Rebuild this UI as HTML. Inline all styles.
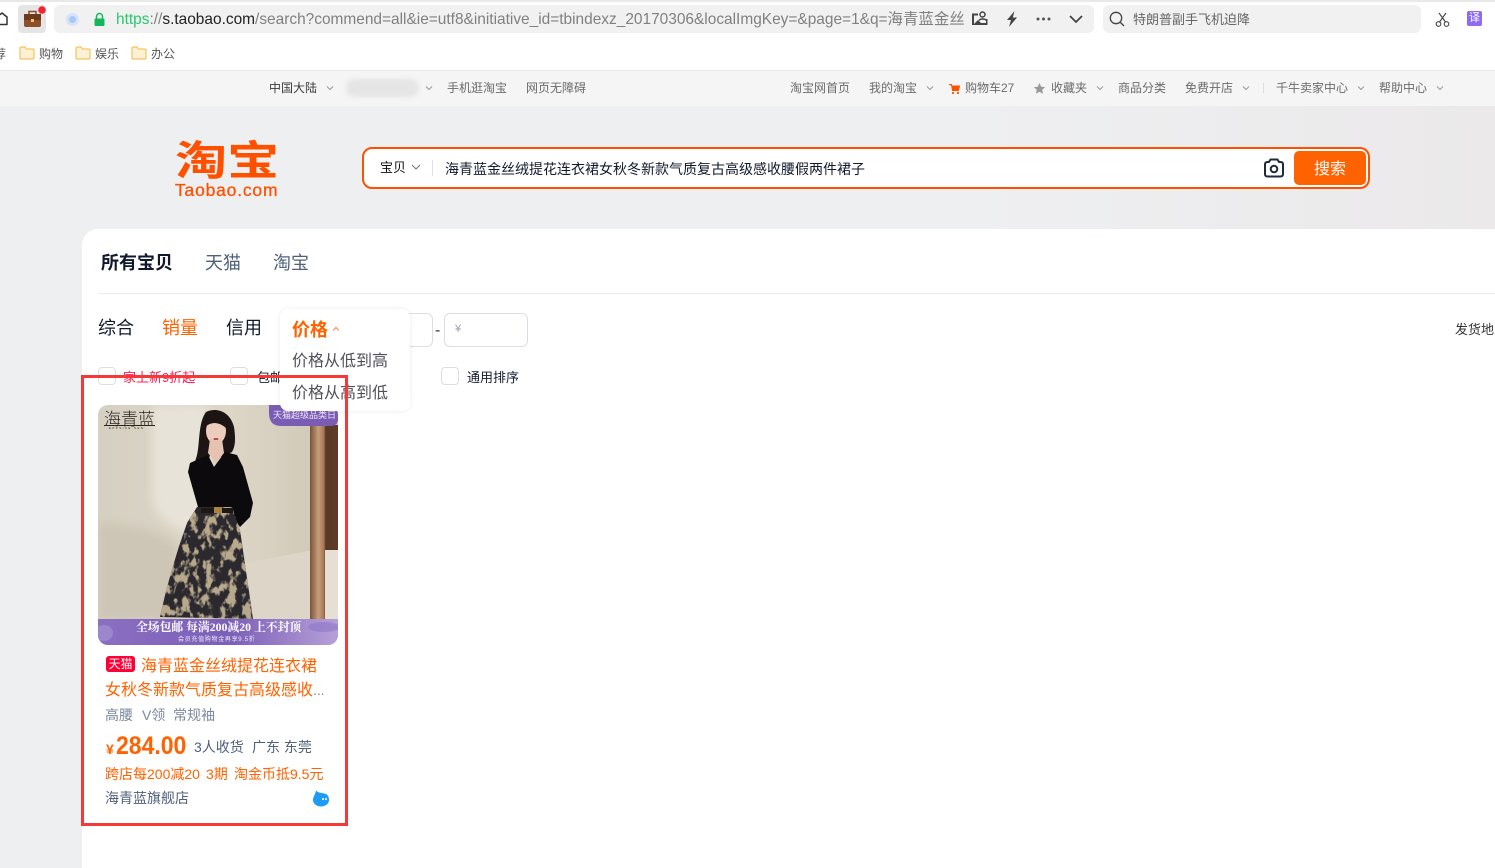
<!DOCTYPE html>
<html lang="zh-CN">
<head>
<meta charset="utf-8">
<title>淘宝搜索</title>
<style>
html,body{margin:0;padding:0;width:1495px;height:868px;overflow:hidden;background:#fff;font-family:"Liberation Sans","Noto Sans CJK SC",sans-serif;}
.a{position:absolute;}
.t{position:absolute;white-space:nowrap;line-height:1;}
.nav{font-size:12px;color:#6b6b6b;top:82px;}
.car{position:absolute;top:85px;width:8px;height:6px;}
.cb{position:absolute;width:16px;height:16px;border:1px solid #dcdee3;border-radius:4px;background:#fff;}
</style>
</head>
<body>
<div class="a" style="left:0;top:0;width:1495px;height:868px;overflow:hidden;">
<!-- browser chrome -->
<div class="a" style="left:0;top:0;width:1495px;height:2px;background:#e8e8e8;"></div>
<svg class="a" style="left:0;top:10px;" width="10" height="18" viewBox="0 0 10 18"><path d="M-3 7L2 3L7 7V14.500H-3Z" fill="none" stroke="#333" stroke-width="1.500" stroke-linejoin="round"/></svg>
<div class="a" style="left:18px;top:5px;width:28px;height:28px;background:#e5e5e5;border-radius:4px;"></div>
<svg class="a" style="left:22px;top:6px;" width="24" height="24" viewBox="0 0 24 24"><path d="M7 8V5.500H14V8" fill="none" stroke="#8a4a2a" stroke-width="1.500"/><rect x="2" y="8" width="17" height="13" rx="2" fill="#8d4f2c"/><rect x="2" y="8" width="17" height="6" fill="#6d3a20"/><rect x="9" y="13" width="3" height="3" fill="#f2c55c"/><circle cx="20" cy="4" r="3.800" fill="#f5222d"/></svg>
<div class="a" style="left:54px;top:5px;width:1040px;height:28px;background:#f1f1f1;border-radius:6px;"></div>
<div class="a" style="left:66px;top:13px;width:13px;height:13px;border-radius:50%;background:#d5e3fb;"></div>
<div class="a" style="left:69px;top:16px;width:7px;height:7px;border-radius:50%;background:#a9c6f7;"></div>
<svg class="a" style="left:93px;top:12px;" width="13" height="15" viewBox="0 0 13 15"><path d="M3.500 7V4.500a3 3 0 0 1 6 0V7" fill="none" stroke="#14b85a" stroke-width="1.500"/><rect x="1.500" y="6.500" width="10" height="7.500" rx="1" fill="#14b85a"/></svg>
<div class="t" style="left:116px;top:11px;width:848px;height:18px;line-height:17px;overflow:hidden;font-size:15.450px;color:#808080;"><span style="color:#28c76f;">https</span>://<span style="color:#222;">s.taobao.com</span>/search?commend=all&amp;ie=utf8&amp;initiative_id=tbindexz_20170306&amp;localImgKey=&amp;page=1&amp;q=海青蓝金丝绒提花</div>
<svg class="a" style="left:970px;top:10px;" width="20" height="18" viewBox="0 0 20 18"><path d="M2 3.500H8V5.500H4V14L8 10L11 13H16V9H17.500V15H2Z" fill="#444"/><circle cx="12.500" cy="4.500" r="2.500" fill="none" stroke="#444" stroke-width="1.500"/><path d="M9 10.500C10 8.500 15 8.500 16.500 10.500" fill="none" stroke="#444" stroke-width="1.500"/></svg>
<svg class="a" style="left:1004px;top:10px;" width="16" height="18" viewBox="0 0 16 18"><path d="M10.500 1L3 10H7L5 17L13 7.500H8.800Z" fill="#444"/></svg>
<svg class="a" style="left:1035px;top:16px;" width="18" height="6" viewBox="0 0 18 6"><circle cx="3" cy="3" r="1.500" fill="#555"/><circle cx="8.500" cy="3" r="1.500" fill="#555"/><circle cx="14" cy="3" r="1.500" fill="#555"/></svg>
<svg class="a" style="left:1068px;top:14px;" width="16" height="10" viewBox="0 0 16 10"><path d="M2 2L8 8L14 2" fill="none" stroke="#444" stroke-width="1.800"/></svg>
<div class="a" style="left:1103px;top:5px;width:318px;height:28px;background:#f1f1f1;border-radius:6px;"></div>
<svg class="a" style="left:1108px;top:10px;" width="18" height="18" viewBox="0 0 18 18"><circle cx="8" cy="8" r="5.700" fill="none" stroke="#444" stroke-width="1.300"/><path d="M12 12L16 16" stroke="#444" stroke-width="1.300"/></svg>
<div class="t" style="left:1133px;top:13px;font-size:13px;color:#666;">特朗普副手飞机迫降</div>
<svg class="a" style="left:1435px;top:11px;" width="16" height="17" viewBox="0 0 16 17"><circle cx="3.500" cy="13" r="2.300" fill="none" stroke="#444" stroke-width="1.100"/><circle cx="11.500" cy="13" r="2.300" fill="none" stroke="#444" stroke-width="1.100"/><path d="M4.500 11L11 2M10.500 11L4 2" stroke="#444" stroke-width="1.100" fill="none"/></svg>
<div class="a" style="left:1467px;top:11px;width:15px;height:15px;border-radius:2px;background:#8f6bf0;color:#fff;font-size:11px;line-height:15px;text-align:center;">译</div>
<!-- bookmarks -->
<div class="t" style="left:-6px;top:48px;font-size:12px;color:#555;">荐</div>
<svg class="a" style="left:19px;top:46px;" width="16" height="14" viewBox="0 0 16 14"><path d="M1 2.500Q1 1 2.500 1H6L7.500 3H14Q15 3 15 4V12Q15 13 14 13H2Q1 13 1 12Z" fill="#fff1d6" stroke="#f6b73c" stroke-width="1"/></svg>
<div class="t" style="left:39px;top:48px;font-size:12px;color:#555;">购物</div>
<svg class="a" style="left:75px;top:46px;" width="16" height="14" viewBox="0 0 16 14"><path d="M1 2.500Q1 1 2.500 1H6L7.500 3H14Q15 3 15 4V12Q15 13 14 13H2Q1 13 1 12Z" fill="#fff1d6" stroke="#f6b73c" stroke-width="1"/></svg>
<div class="t" style="left:95px;top:48px;font-size:12px;color:#555;">娱乐</div>
<svg class="a" style="left:131px;top:46px;" width="16" height="14" viewBox="0 0 16 14"><path d="M1 2.500Q1 1 2.500 1H6L7.500 3H14Q15 3 15 4V12Q15 13 14 13H2Q1 13 1 12Z" fill="#fff1d6" stroke="#f6b73c" stroke-width="1"/></svg>
<div class="t" style="left:151px;top:48px;font-size:12px;color:#555;">办公</div>
<!-- site nav -->
<div class="a" style="left:0;top:70px;width:1495px;height:36px;background:#f5f5f5;border-top:1px solid #e8e8e8;box-sizing:border-box;"></div>
<div class="t nav" style="left:269px;color:#3c3c3c;">中国大陆</div>
<svg class="car" style="left:326px;" viewBox="0 0 8 6"><path d="M1 1.500L4 4.500L7 1.500" fill="none" stroke="#999" stroke-width="1"/></svg>
<div class="a" style="left:346px;top:79px;width:73px;height:18px;border-radius:9px;background:#e5e5e5;filter:blur(2px);"></div>
<svg class="car" style="left:425px;" viewBox="0 0 8 6"><path d="M1 1.500L4 4.500L7 1.500" fill="none" stroke="#999" stroke-width="1"/></svg>
<div class="t nav" style="left:447px;">手机逛淘宝</div>
<div class="t nav" style="left:526px;">网页无障碍</div>
<div class="t nav" style="left:790px;">淘宝网首页</div>
<div class="t nav" style="left:869px;">我的淘宝</div>
<svg class="car" style="left:926px;" viewBox="0 0 8 6"><path d="M1 1.500L4 4.500L7 1.500" fill="none" stroke="#999" stroke-width="1"/></svg>
<svg class="a" style="left:949px;top:83px;" width="11" height="12" viewBox="0 0 11 12"><path d="M0 1.500H2.500L3.500 7.500H9.500L10.500 3H3" fill="#ff5000" stroke="#ff5000" stroke-width="1"/><circle cx="4" cy="10" r="1.100" fill="#ff5000"/><circle cx="9" cy="10" r="1.100" fill="#ff5000"/></svg>
<div class="t nav" style="left:965px;">购物车27</div>
<svg class="a" style="left:1033px;top:82px;" width="13" height="13" viewBox="0 0 13 13"><path d="M6.500 1L8.200 4.700L12.200 5.100L9.200 7.800L10 11.800L6.500 9.800L3 11.800L3.800 7.800L.8 5.100L4.800 4.700Z" fill="#999"/></svg>
<div class="t nav" style="left:1051px;">收藏夹</div>
<svg class="car" style="left:1096px;" viewBox="0 0 8 6"><path d="M1 1.500L4 4.500L7 1.500" fill="none" stroke="#999" stroke-width="1"/></svg>
<div class="t nav" style="left:1118px;">商品分类</div>
<div class="t nav" style="left:1185px;">免费开店</div>
<svg class="car" style="left:1242px;" viewBox="0 0 8 6"><path d="M1 1.500L4 4.500L7 1.500" fill="none" stroke="#999" stroke-width="1"/></svg>
<div class="a" style="left:1263px;top:83px;width:1px;height:10px;background:#ddd;"></div>
<div class="t nav" style="left:1276px;">千牛卖家中心</div>
<svg class="car" style="left:1357px;" viewBox="0 0 8 6"><path d="M1 1.500L4 4.500L7 1.500" fill="none" stroke="#999" stroke-width="1"/></svg>
<div class="t nav" style="left:1379px;">帮助中心</div>
<svg class="car" style="left:1436px;" viewBox="0 0 8 6"><path d="M1 1.500L4 4.500L7 1.500" fill="none" stroke="#999" stroke-width="1"/></svg>
<!-- header background -->
<div class="a" style="left:0;top:106px;width:1495px;height:762px;background:linear-gradient(90deg,#eeeff1 0%,#eeeff1 65%,#ebe9ea 100%);"></div>
<!-- logo -->
<div class="t" style="left:175px;top:137px;font-size:41px;font-weight:700;color:#ff5000;font-family:'Noto Sans CJK SC',sans-serif;line-height:41px;transform:scaleX(1.27);transform-origin:left top;">淘宝</div>
<div class="t" style="left:175px;top:182px;font-size:17.500px;color:#ff5000;letter-spacing:.8px;-webkit-text-stroke:.3px #ff5000;">Taobao.com</div>
<!-- search -->
<div class="a" style="left:362px;top:147px;width:1008px;height:42px;box-sizing:border-box;background:#fff;border:2px solid #ff5000;border-radius:10px;"></div>
<div class="t" style="left:380px;top:161px;font-size:13px;color:#111;">宝贝</div>
<svg class="a" style="left:411px;top:164px;" width="10" height="7" viewBox="0 0 10 7"><path d="M1 1L5 5L9 1" fill="none" stroke="#6f7686" stroke-width="1.100"/></svg>
<div class="a" style="left:432px;top:160px;width:1px;height:16px;background:#dfe1e6;"></div>
<div class="t" style="left:445px;top:162px;font-size:14px;color:#11192d;letter-spacing:0;">海青蓝金丝绒提花连衣裙女秋冬新款气质复古高级感收腰假两件裙子</div>
<svg class="a" style="left:1263px;top:157px;" width="22" height="22" viewBox="0 0 22 22"><path d="M7.500 2.500H14.500L16 5H17.500Q20 5 20 7.500V17Q20 19.500 17.500 19.500H4.500Q2 19.500 2 17V7.500Q2 5 4.500 5H6Z" fill="none" stroke="#1f2a3d" stroke-width="2" stroke-linejoin="round"/><circle cx="11" cy="12" r="3.300" fill="none" stroke="#1f2a3d" stroke-width="2"/></svg>
<div class="a" style="left:1294px;top:151px;width:72px;height:34px;background:#ff6200;border-radius:5px;color:#fff;font-size:16px;line-height:37px;text-align:center;">搜索</div>
<!-- white content panel -->
<div class="a" style="left:82px;top:229px;width:1413px;height:639px;background:#fff;border-radius:16px 0 0 0;"></div>
<div class="t" style="left:101px;top:254px;font-size:18px;font-weight:700;color:#11192d;">所有宝贝</div>
<div class="t" style="left:205px;top:254px;font-size:18px;color:#50607a;">天猫</div>
<div class="t" style="left:273px;top:254px;font-size:18px;color:#50607a;">淘宝</div>
<div class="a" style="left:98px;top:293px;width:1397px;height:1px;background:#e9eaec;"></div>
<!-- sort bar -->
<div class="t" style="left:98px;top:319px;font-size:18px;color:#11192d;">综合</div>
<div class="t" style="left:162px;top:319px;font-size:18px;color:#ff6200;">销量</div>
<div class="t" style="left:226px;top:319px;font-size:18px;color:#11192d;">信用</div>
<div class="a" style="left:395px;top:313px;width:38px;height:34px;box-sizing:border-box;border:1px solid #dcdee3;border-radius:6px;"></div>
<div class="t" style="left:435px;top:323px;font-size:16px;color:#333;">-</div>
<div class="a" style="left:444px;top:313px;width:84px;height:34px;box-sizing:border-box;border:1px solid #dcdee3;border-radius:6px;"></div>
<div class="t" style="left:455px;top:324px;font-size:11px;color:#9aa0ab;">¥</div>
<div class="t" style="left:1455px;top:323px;font-size:13px;color:#333;">发货地</div>
<div class="cb" style="left:98px;top:367px;"></div>
<div class="t" style="left:123px;top:371px;font-size:13px;color:#ff1a55;">家上新9折起</div>
<div class="cb" style="left:230px;top:367px;"></div>
<div class="t" style="left:257px;top:371px;font-size:13px;color:#11192d;">包邮</div>
<div class="cb" style="left:441px;top:367px;"></div>
<div class="t" style="left:467px;top:371px;font-size:13px;color:#11192d;">通用排序</div>
<!-- product image -->
<svg class="a" style="left:98px;top:405px;border-radius:10px;" width="240" height="240" viewBox="0 0 240 240">
<defs>
<linearGradient id="bg" x1="0" y1="0" x2="1" y2="0"><stop offset="0" stop-color="#d6d0c2"/><stop offset=".55" stop-color="#ddd6c7"/><stop offset="1" stop-color="#cfc6b4"/></linearGradient>
<linearGradient id="cur" x1="0" y1="0" x2="1" y2="0"><stop offset="0" stop-color="#7a5238"/><stop offset=".3" stop-color="#c79f7c"/><stop offset=".5" stop-color="#a47550"/><stop offset=".56" stop-color="#5a3827"/><stop offset="1" stop-color="#5f3c2a"/></linearGradient>
<linearGradient id="band" x1="0" y1="0" x2="1" y2="0"><stop offset="0" stop-color="#8b6fc1"/><stop offset=".55" stop-color="#7c5fb8"/><stop offset="1" stop-color="#b6a0d8"/></linearGradient>
<filter id="b8"><feGaussianBlur stdDeviation="5"/></filter>
<filter id="tx" x="0" y="0" width="1" height="1" color-interpolation-filters="sRGB"><feTurbulence type="fractalNoise" baseFrequency=".13 .09" numOctaves="3" seed="4"/><feColorMatrix values="0 0 0 0 .72  0 0 0 0 .66  0 0 0 0 .55  7 0 0 0 -3.400"/></filter>
<clipPath id="skirt"><path d="M99 102H134L142 125L155 214L62 212Q72 165 89 118Z"/></clipPath>
</defs>
<rect width="240" height="240" fill="url(#bg)"/>
<path d="M54 0H110V140C85 125 56 118 54 92Z" fill="#e8e3d8" filter="url(#b8)"/>
<path d="M0 118C30 118 60 125 80 140L76 215H0Z" fill="#cdc5b5" filter="url(#b8)"/>
<path d="M148 158L215 145V215H145Z" fill="#ddd6c8"/>
<rect x="212" y="20" width="28" height="195" fill="url(#cur)"/>
<rect x="227" y="145" width="13" height="70" fill="#e6e0d4"/>
<!-- hair -->
<path d="M108 7C118 2 132 6 136 22C138 35 137 42 134 47L124 52L112 50L104 78L96 76C90 68 96 62 99 50C102 38 100 18 108 7Z" fill="#1c1513"/>
<!-- face and neck -->
<ellipse cx="118" cy="26" rx="10" ry="13" fill="#eccdbd"/>
<path d="M112 34H124L126 48L118 58L110 48Z" fill="#e6c3b1"/>
<path d="M108 21Q118 14 128 23L130 13Q118 5 107 14Z" fill="#1c1513"/>
<ellipse cx="118" cy="34" rx="2.500" ry="1" fill="#b3404a"/>
<!-- blouse -->
<path d="M110 50L116 62L127 47L139 50L145 62L155 98L152 112L142 122L135 112L132 102H100L90 67L92 58Z" fill="#0c0a0c"/>
<!-- skirt -->
<g clip-path="url(#skirt)">
<rect x="55" y="100" width="105" height="120" fill="#2b292e"/>
<rect x="55" y="100" width="105" height="120" filter="url(#tx)"/>
</g>
<rect x="103" y="103" width="32" height="5" fill="#1d1815"/>
<rect x="116" y="102" width="8" height="6" fill="#a8843d"/>
<!-- bottom band -->
<rect x="0" y="214" width="240" height="26" fill="url(#band)"/>
<ellipse cx="6" cy="228" rx="9" ry="8" fill="#9c86cc"/>
<ellipse cx="226" cy="222" rx="16" ry="5" fill="#8e76c6" opacity=".6"/>
<!-- top-right badge -->
<path d="M171 0H240V14Q240 21 232 21H183Q171 21 171 8Z" fill="#7b5cb4"/>
</svg>
<!-- image text overlays -->
<div class="t" style="left:104px;top:411px;font-size:17px;color:#2a2420;font-weight:300;">海青蓝</div>
<div class="a" style="left:104px;top:425px;width:51px;height:1px;background:#2a2420;"></div>
<div class="t" style="left:109px;top:427px;font-size:3px;color:#2a2420;letter-spacing:1.400px;">EPPSIUE SEN</div>
<div class="t" style="left:273px;top:411px;font-size:9px;color:#f1eaf9;">天猫超级品类日</div>
<div class="t" style="left:136px;top:622px;font-size:11.800px;font-weight:700;color:#fff;font-family:'Liberation Serif','Noto Serif CJK SC',serif;">全场包邮 每满200减20 上不封顶</div>
<div class="t" style="left:178px;top:637px;font-size:6px;color:#efe8fa;letter-spacing:.7px;">会员充值购物金再享9.5折</div>
<!-- dropdown -->
<div class="a" style="left:280px;top:309px;width:130px;height:102px;background:#fff;border-radius:8px;box-shadow:0 0 6px rgba(0,0,0,.08);"></div>
<div class="t" style="left:292px;top:321px;font-size:18px;font-weight:700;color:#ff6200;">价格</div>
<svg class="a" style="left:332px;top:326px;" width="8" height="6" viewBox="0 0 8 6"><path d="M1 4.500L4 1.500L7 4.500" fill="none" stroke="#ff8a3d" stroke-width="1.100"/></svg>
<div class="t" style="left:292px;top:354px;font-size:16px;color:#50505a;">价格从低到高</div>
<div class="t" style="left:292px;top:386px;font-size:16px;color:#50505a;">价格从高到低</div>
<!-- red highlight -->
<div class="a" style="left:81px;top:375px;width:267px;height:451px;box-sizing:border-box;border:3px solid #f53838;"></div>
<!-- product info -->
<div class="a" style="left:106px;top:656px;width:29px;height:16px;background:#ff0036;border-radius:3px;color:#fff;font-size:12px;line-height:16px;text-align:center;">天猫</div>
<div class="t" style="left:141px;top:659px;font-size:16px;color:#ff6200;">海青蓝金丝绒提花连衣裙</div>
<div class="t" style="left:105px;top:683px;font-size:16px;color:#ff6200;">女秋冬新款气质复古高级感收<span style="color:#7c889c;font-size:14px;">...</span></div>
<div class="t" style="left:105px;top:708px;font-size:14px;color:#7c889c;">高腰</div>
<div class="t" style="left:142px;top:708px;font-size:14px;color:#7c889c;">V领</div>
<div class="t" style="left:173px;top:708px;font-size:14px;color:#7c889c;">常规袖</div>
<div class="t" style="left:106px;top:742px;font-size:14px;font-weight:700;color:#ff6200;">¥</div>
<div class="t" style="left:116px;top:734px;font-size:25px;font-weight:700;color:#ff6200;transform:scaleX(.92);transform-origin:left top;">284.00</div>
<div class="t" style="left:194px;top:740px;font-size:14px;color:#50607a;">3人收货</div>
<div class="t" style="left:252px;top:740px;font-size:14px;color:#50607a;">广东 东莞</div>
<div class="t" style="left:105px;top:767px;font-size:14px;color:#ff6200;">跨店每200减20</div>
<div class="t" style="left:206px;top:767px;font-size:14px;color:#ff6200;">3期</div>
<div class="t" style="left:234px;top:767px;font-size:14px;color:#ff6200;">淘金币抵9.5元</div>
<div class="t" style="left:105px;top:791px;font-size:14px;color:#50607a;">海青蓝旗舰店</div>
<svg class="a" style="left:312px;top:790px;" width="18" height="18" viewBox="0 0 18 18"><path d="M4 .5C6 3 9 2.500 12 3.500C16 4 17 7 17 10C17 14 13 16.500 9 16.500C5 16.500 1 14 1 10C1 7 3 5 4 .5Z" fill="#1e9bf5"/><circle cx="11" cy="9" r="1" fill="#fff"/><circle cx="14" cy="9" r="1" fill="#fff"/></svg>
</div>
</body>
</html>
